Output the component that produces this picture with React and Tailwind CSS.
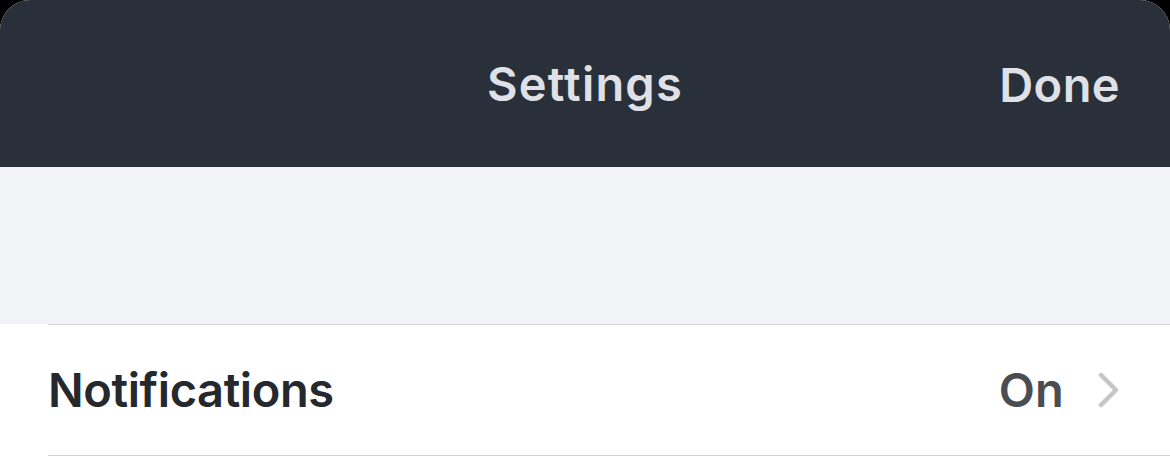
export default function App() {
  return (
    <div className="min-h-[466px] bg-black" style={{ fontFamily: 'Inter, "Noto Sans", sans-serif' }}>
      <div className="overflow-hidden rounded-t-[30px] bg-white">
        <header className="relative flex h-[167px] items-center justify-center bg-[#2a303a]">
          <h1 className="pt-[2px] text-[47px] font-semibold tracking-[1.2px] text-[#dfe1e6]">Settings</h1>
          <button className="absolute right-[50px] top-1/2 -translate-y-1/2 pt-[2px] text-[47px] font-semibold tracking-[0.4px] text-[#dfe1e6]">
            Done
          </button>
        </header>

        <div className="h-[157px] bg-[#f2f3f7]" />

        <div className="pl-[48px]">
          <div className="flex h-[132px] items-center justify-between border-y border-[#d1d1d6] pr-[50px]">
            <span className="text-[47px] font-semibold tracking-[-0.4px] text-[#25282d]">Notifications</span>
            <div className="flex items-center gap-[34px]">
              <span className="text-[47px] font-semibold tracking-[0.2px] text-[#4a4d52]">On</span>
              <svg width="22" height="36" viewBox="0 0 22 36" fill="none">
                <path d="M3 3l15 15L3 33" stroke="#c6c6c8" strokeWidth="4.5" strokeLinecap="round" strokeLinejoin="round" />
              </svg>
            </div>
          </div>
        </div>
        <div className="h-[10px]" />
      </div>
    </div>
  );
}
